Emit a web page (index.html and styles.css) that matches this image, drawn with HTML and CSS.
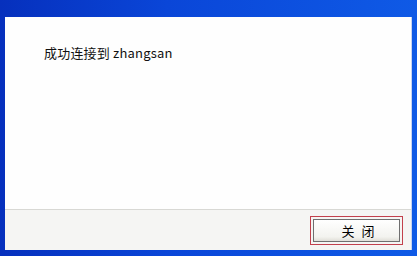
FILE: index.html
```html
<!DOCTYPE html>
<html>
<head>
<meta charset="utf-8">
<link rel="stylesheet" href="styles.css">
</head>
<body>
<div class="frame">
  <div class="titlebar"></div>
  <div class="inner">
    <div class="content">
      <p class="msg">成功连接到 zhangsan</p>
    </div>
    <div class="footer">
      <div class="focus">
        <button class="btn">关 闭</button>
      </div>
    </div>
  </div>
  <div class="bottom"></div>
</div>
</body>
</html>
```

FILE: styles.css
```css
html, body {
  margin: 0;
  padding: 0;
  width: 417px;
  height: 256px;
  overflow: hidden;
}
body {
  font-family: "Noto Sans CJK SC", sans-serif;
  font-size: 12px;
}
.frame {
  width: 417px;
  height: 256px;
  display: flex;
  flex-direction: column;
  background: linear-gradient(to right, #0630bd 0%, #0a46d8 40%, #0f5ae6 100%);
  padding: 0 5px 0 5px;
  box-sizing: border-box;
}
.titlebar {
  height: 17px;
  flex: none;
}
.inner {
  flex: 1;
  display: flex;
  flex-direction: column;
  background: #fff;
  border-right: 1px solid #c8d4f0;
}
.content {
  flex: 1;
  background: #fefefe;
  padding: 0 0 0 39px;
}
.msg {
  margin: 27px 0 0 0;
  font-family: "Noto Sans CJK SC", sans-serif;
  font-size: 13px;
  line-height: 17px;
  letter-spacing: 0.2px;
  color: #111;
}
.footer {
  height: 40px;
  flex: none;
  background: #f5f5f3;
  border-top: 1px solid #d8d8d4;
  display: flex;
  justify-content: flex-end;
  align-items: center;
  padding-right: 8px;
}
.focus {
  border: 1px solid #c2404c;
  padding: 2px;
  display: flex;
}
.btn {
  width: 87px;
  height: 23px;
  border: 1px solid #6f6f6f;
  background: linear-gradient(#ffffff, #f3f3ef 80%, #e0dfd8);
  font-family: "Noto Sans CJK SC", sans-serif;
  font-size: 13px;
  font-weight: normal;
  color: #000;
  padding: 0 0 0 3px;
  word-spacing: 4px;
}
.bottom {
  height: 6px;
  flex: none;
}
```
